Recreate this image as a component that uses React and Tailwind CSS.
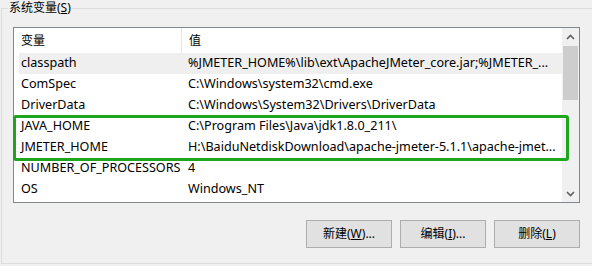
import React from "react";

const rows = [
    { name: "classpath", value: "%JMETER_HOME%\\lib\\ext\\ApacheJMeter_core.jar;%JMETER_...", active: true },
    { name: "ComSpec", value: "C:\\Windows\\system32\\cmd.exe" },
    { name: "DriverData", value: "C:\\Windows\\System32\\Drivers\\DriverData" },
    { name: "JAVA_HOME", value: "C:\\Program Files\\Java\\jdk1.8.0_211\\" },
    { name: "JMETER_HOME", value: "H:\\BaiduNetdiskDownload\\apache-jmeter-5.1.1\\apache-jmet..." },
    { name: "NUMBER_OF_PROCESSORS", value: "4" },
    { name: "OS", value: "Windows_NT" },
];

const font = { fontFamily: '"Noto Sans", "Noto Sans CJK SC", sans-serif' };

const Chevron = ({ down }) => (
    <svg width="9" height="6" viewBox="0 0 9 6" className="block">
        <path
            d={down ? "M1 1 L4.5 4.5 L8 1" : "M1 5 L4.5 1.5 L8 5"}
            fill="none"
            stroke="#606060"
            strokeWidth="1.6"
        />
    </svg>
);

const Button = ({ label, hotkey, suffix }) => (
    <button className="w-[86px] h-[28px] bg-[#e1e1e1] border border-[#adadad] text-[12px] text-black flex items-center justify-center">
        {label}(<span className="underline">{hotkey}</span>){suffix}
    </button>
);

const App = () => {
    return (
        <div className="w-[592px] h-[266px] overflow-hidden bg-[#f0f0f0] text-black" style={font}>
            <fieldset className="ml-[1px] w-[620px] h-[264px] border border-r-0 border-[#dcdcdc]">
                <legend className="ml-[6px] px-[1px] text-[12px] leading-[16px]">
                    系统变量(<span className="underline">S</span>)
                </legend>
                <div className="pl-[11px] w-[578px]">
                    <div className="relative mt-[11px] h-[176px] border border-[#828790] bg-white flex">
                        <div className="flex-1 flex flex-col overflow-hidden">
                            <div className="h-[25px] flex items-center text-[12px]">
                                <div className="w-[168px] h-full pl-[7px] flex items-center border-r border-[#e5e5e5]">变量</div>
                                <div className="pl-[7px]">值</div>
                            </div>
                            {rows.map(r => (
                                <div
                                    key={r.name}
                                    className={`ml-[5px] h-[21px] flex items-center text-[12.6px] whitespace-nowrap ${r.active ? "bg-[#efefef]" : ""}`}
                                >
                                    <div className="w-[169px] shrink-0 pl-[2px]">{r.name}</div>
                                    <div>{r.value}</div>
                                </div>
                            ))}
                        </div>
                        <div className="w-[17px] flex flex-col bg-[#f0f0f0]">
                            <div className="h-[18px] flex items-center justify-center">
                                <Chevron />
                            </div>
                            <div className="h-[54px] mx-[1px] bg-[#cdcdcd]" />
                            <div className="flex-1" />
                            <div className="h-[17px] flex items-center justify-center">
                                <Chevron down />
                            </div>
                        </div>
                        <div className="absolute left-[-1px] top-[87px] w-[556px] h-[46px] border-[3px] border-[#1ea51e] rounded-[3px]" />
                    </div>
                    <div className="mt-[17px] flex justify-end gap-[8px]">
                        <Button label="新建" hotkey="W" suffix="..." />
                        <Button label="编辑" hotkey="I" suffix="..." />
                        <Button label="删除" hotkey="L" suffix="" />
                    </div>
                </div>
            </fieldset>
        </div>
    );
};

export default App;
